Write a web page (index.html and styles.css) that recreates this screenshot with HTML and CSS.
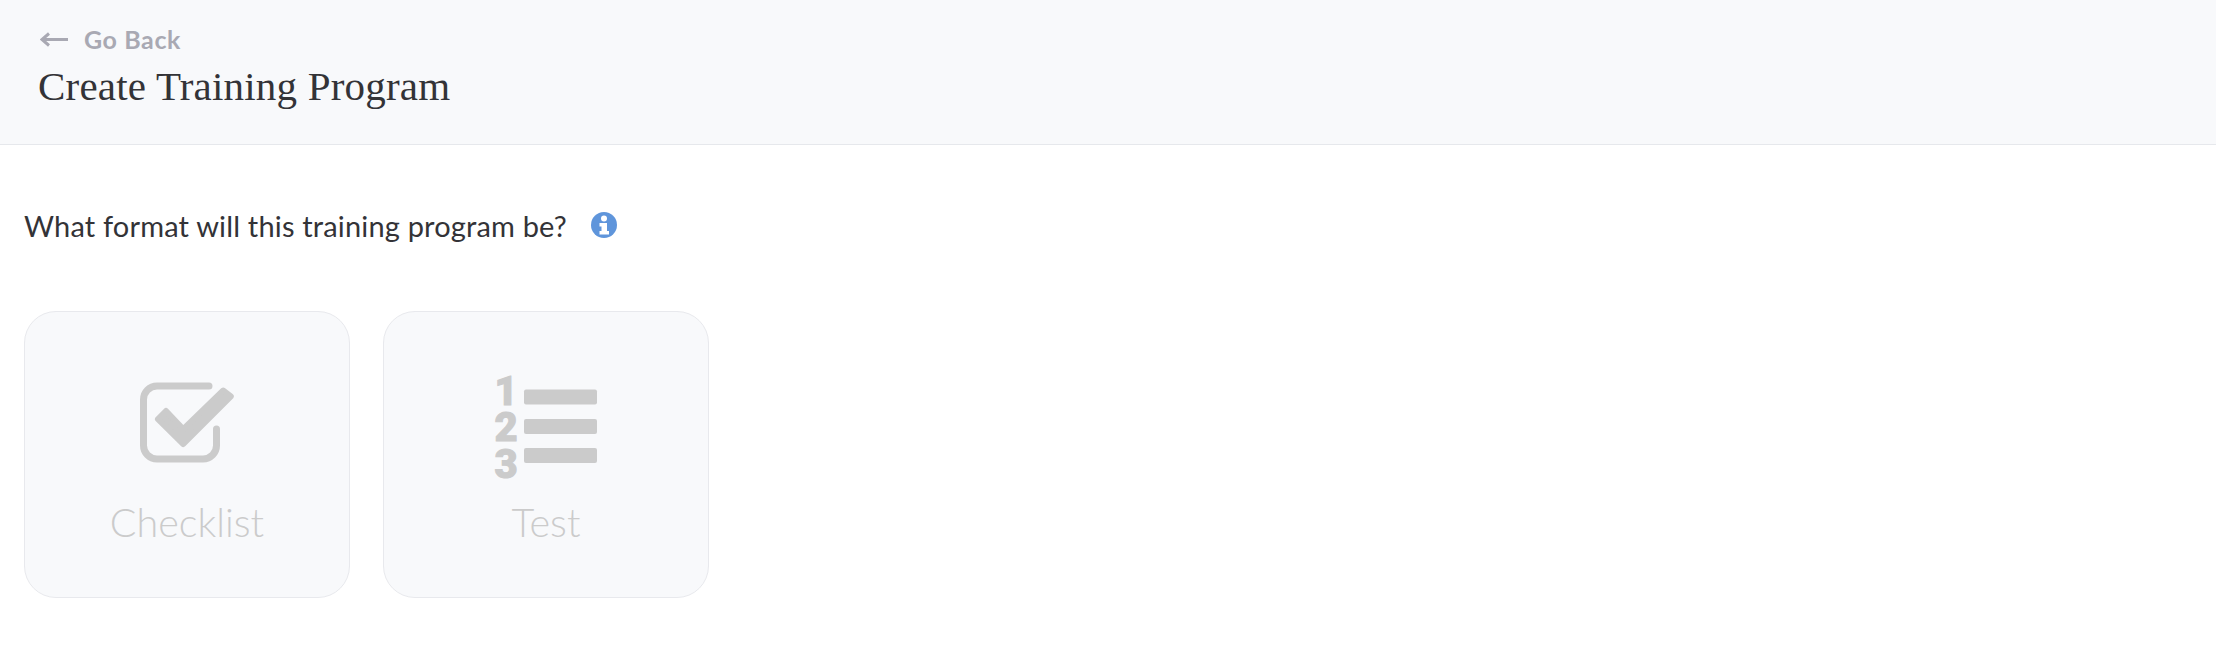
FILE: index.html
```html
<!DOCTYPE html>
<html lang="en">

<head>
    <meta charset="UTF-8">
    <title>Create Training Program</title>
    <link rel="stylesheet" href="styles.css">
</head>

<body>
    <header class="page-header">
        <a class="back-link" href="#">
            <svg class="back-arrow" viewBox="0 0 28 16" width="28" height="16">
                <path d="M28 8.500H2M9 2.500 2 8.500l7 6" />
            </svg>
            <span>Go Back</span>
        </a>
        <h1>Create Training Program</h1>
    </header>

    <main class="content">
        <div class="question">
            <span>What format will this training program be?</span>
            <svg class="info-icon" viewBox="0 0 26 26" width="26" height="26">
                <circle class="info-bg" cx="13" cy="13" r="13" />
                <circle class="info-mark" cx="13" cy="6.500" r="3" />
                <path class="info-mark" d="M8.500 11h7.500v8h2v3.500h-9.500v-3.500h2v-4.500h-2z" />
            </svg>
        </div>

        <div class="format-list">
            <div class="format-card">
                <svg class="format-icon" viewBox="0 0 104 104" width="104" height="104">
                    <path class="check-box" d="M74 11H22A13.500 13.500 0 0 0 8.500 24.500V70.500A13.500 13.500 0 0 0 22 84H68A13.500 13.500 0 0 0 81.500 70.500V54" />
                    <path class="check-mark" d="M23 44 31 36 48.300 54.200 88.300 15.500 95.800 21.300 48.300 69z" />
                </svg>
                <span>Checklist</span>
            </div>
            <div class="format-card">
                <svg class="format-icon" viewBox="0 0 104 104" width="104" height="104">
                    <text class="list-num" x="12" y="29.500">1</text>
                    <text class="list-num" x="12" y="66">2</text>
                    <text class="list-num" x="12" y="103">3</text>
                    <rect class="list-bar" x="30" y="14.500" width="73" height="15" rx="2" />
                    <rect class="list-bar" x="30" y="44" width="73" height="15" rx="2" />
                    <rect class="list-bar" x="30" y="73" width="73" height="15" rx="2" />
                </svg>
                <span>Test</span>
            </div>
        </div>
    </main>
</body>

</html>
```

FILE: styles.css
```css
body {
    margin: 0;
    background-color: #ffffff;
    font-family: Lato, "Open Sans", sans-serif;
    color: #333337;
}

/* header */
.page-header {
    height: 145px;
    box-sizing: border-box;
    padding: 24px 0 0 38px;
    background-color: #f8f9fb;
    border-bottom: 1px solid #e6e8ec;
}

.back-link {
    display: flex;
    align-items: center;
    gap: 16px;
    height: 30px;
    padding-left: 2px;
    color: #a9a9b3;
    font-size: 25px;
    font-weight: 700;
    letter-spacing: 0.6px;
    text-decoration: none;
}

.back-arrow path {
    fill: none;
    stroke: #a9a9b3;
    stroke-width: 3;
}

h1 {
    margin: 9px 0 0;
    font-family: "Liberation Serif", serif;
    font-size: 41px;
    font-weight: 400;
    letter-spacing: 0.2px;
    line-height: 46px;
}

/* question */
.content {
    padding: 63px 24px 0;
}

.question {
    display: flex;
    align-items: center;
    gap: 24px;
    height: 34px;
    font-size: 29px;
    letter-spacing: 0.17px;
}

.info-bg {
    fill: #5f95db;
}

.info-mark {
    fill: #ffffff;
}

/* format cards */
.format-list {
    display: flex;
    gap: 33px;
    margin-top: 69px;
}

.format-card {
    width: 326px;
    height: 287px;
    box-sizing: border-box;
    padding-top: 63px;
    display: flex;
    flex-direction: column;
    align-items: center;
    background-color: #f8f9fb;
    border: 1px solid #e8e9ed;
    border-radius: 32px;
    color: #cbcbcb;
    font-size: 39.5px;
    font-weight: 300;
    line-height: 46px;
}

.format-icon {
    margin-bottom: 20px;
    overflow: visible;
}

.check-box {
    fill: none;
    stroke: #cbcbcb;
    stroke-width: 7;
    stroke-linecap: round;
}

.check-mark {
    fill: #cbcbcb;
    stroke: #cbcbcb;
    stroke-width: 6;
    stroke-linejoin: round;
}

.list-num {
    fill: #cbcbcb;
    stroke: #cbcbcb;
    stroke-width: 1;
    font-family: Roboto, sans-serif;
    font-size: 40px;
    font-weight: 900;
    text-anchor: middle;
}

.list-bar {
    fill: #cbcbcb;
}
```
